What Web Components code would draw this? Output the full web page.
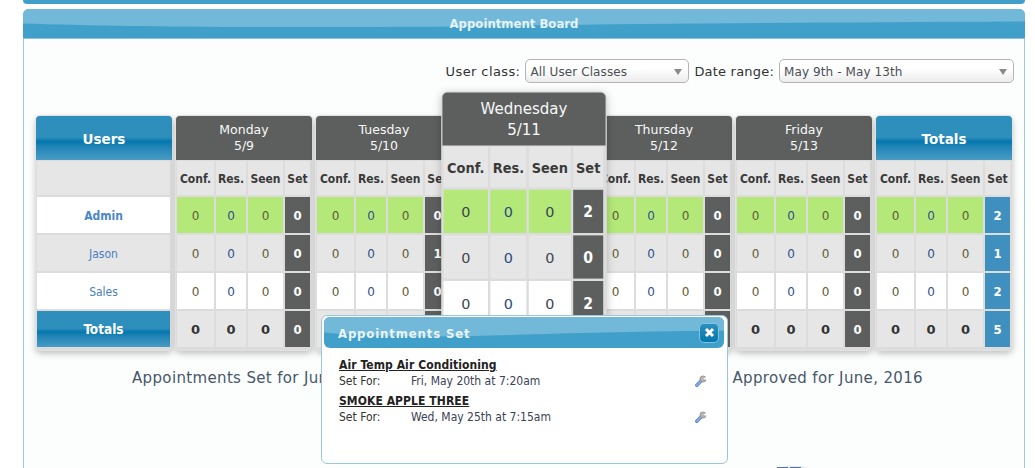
<!DOCTYPE html>
<html>
<head>
<meta charset="utf-8">
<title>Appointment Board</title>
<style>
    html, body { margin: 0; height: 100%; overflow: hidden; background: #fff; }
    body { font-family: "DejaVu Sans Condensed", "DejaVu Sans", sans-serif; }
    app-page { padding: 0 10px 0 23px; }
</style>
</head>
<body>
<app-page>
    <board-panel title="Appointment Board">
        <board-toolbar>
            <span class="lbl wide">User class:</span>
            <fake-select width="164">All User Classes</fake-select>
            <span class="lbl">Date range:</span>
            <fake-select width="235">May 9th - May 13th</fake-select>
        </board-toolbar>
        <board-grid>
            <users-column></users-column>
            <day-column day="Monday" date="5/9" sets="0,0,0,0"></day-column>
            <day-column day="Tuesday" date="5/10" sets="0,1,0,0"></day-column>
            <day-column day="Wednesday" date="5/11" sets="2,0,2,0" lifted></day-column>
            <day-column day="Thursday" date="5/12" sets="0,0,0,0"></day-column>
            <day-column day="Friday" date="5/13" sets="0,0,0,0"></day-column>
            <day-column day="Totals" sets="2,1,2,5" totals></day-column>
        </board-grid>
        <board-caption>
            <span>Appointments Set for June, 2016</span>
            <span>Appointments Approved for June, 2016</span>
        </board-caption>
        <board-globe></board-globe>
        <appt-popup title="Appointments Set">
            <appt-item name="Air Temp Air Conditioning" when="Fri, May 20th at 7:20am"></appt-item>
            <appt-item name="SMOKE APPLE THREE" when="Wed, May 25th at 7:15am"></appt-item>
        </appt-popup>
    </board-panel>
</app-page>
<script>
const glossBar = `
    <svg class="gloss" viewBox="0 0 1000 30" preserveAspectRatio="none" aria-hidden="true">
        <path d="M0 0H1000V13C800 14 650 15 500 17C300 20 120 19 0 15Z" fill="#72b8d8"/>
    </svg>`;

class AppPage extends HTMLElement {
    connectedCallback() {
        this.attachShadow({ mode: 'open' });
        this.shadowRoot.innerHTML = `
            <style>
                :host { display: block; }
                .topbar {
                    height: 4px;
                    background: #409fc9;
                    border-radius: 0 0 5px 5px;
                    margin-bottom: 5px;
                }
            </style>
            <div class="topbar"></div>
            <slot></slot>
        `;
    }
}
customElements.define('app-page', AppPage);

class BoardPanel extends HTMLElement {
    connectedCallback() {
        this.attachShadow({ mode: 'open' });
        this.shadowRoot.innerHTML = `
            <style>
                :host { display: block; position: relative; }
                header {
                    position: relative;
                    height: 29px;
                    background: #41a0ca;
                    border-radius: 6px 6px 0 0;
                    overflow: hidden;
                    display: flex;
                    align-items: center;
                    justify-content: center;
                    padding-right: 20px;
                    color: #e4f3fa;
                    font-size: 13px;
                    font-weight: bold;
                }
                .gloss { position: absolute; inset: 0; width: 100%; height: 100%; }
                header span { position: relative; padding-bottom: 1px; }
                .body {
                    background: #fcfdfd;
                    border: 1px solid #9cc8e2;
                    border-top-color: #8fc0de;
                    border-bottom: 0;
                    height: 430px;
                    box-sizing: border-box;
                    overflow: hidden;
                }
            </style>
            <header>${glossBar}<span>${this.getAttribute('title')}</span></header>
            <div class="body"><slot></slot></div>
        `;
    }
}
customElements.define('board-panel', BoardPanel);

class BoardToolbar extends HTMLElement {
    connectedCallback() {
        this.attachShadow({ mode: 'open' });
        this.shadowRoot.innerHTML = `
            <style>
                :host {
                    display: flex;
                    justify-content: flex-end;
                    align-items: center;
                    gap: 5px;
                    height: 24px;
                    margin-top: 20px;
                    padding-right: 10px;
                    color: #333;
                    font-family: "DejaVu Sans", sans-serif;
                    font-size: 13px;
                }
                ::slotted(.lbl) { letter-spacing: 0.2px; }
                ::slotted(.wide) { letter-spacing: 0.4px; }
            </style>
            <slot></slot>
        `;
    }
}
customElements.define('board-toolbar', BoardToolbar);

class FakeSelect extends HTMLElement {
    connectedCallback() {
        this.attachShadow({ mode: 'open' });
        this.shadowRoot.innerHTML = `
            <style>
                :host {
                    display: flex;
                    align-items: center;
                    box-sizing: border-box;
                    height: 24px;
                    width: ${this.getAttribute('width')}px;
                    padding: 1px 6px 0 4px;
                    border: 1px solid #b4b4b4;
                    border-radius: 5px;
                    background: linear-gradient(#fff 40%, #ececec);
                    color: #4a4f55;
                    font-size: 12px;
                    letter-spacing: 0.1px;
                }
                .txt { flex: 1; }
                .arrow {
                    border: 4px solid transparent;
                    border-top: 6px solid #8a8a8a;
                    border-bottom: 0;
                }
            </style>
            <span class="txt"><slot></slot></span>
            <span class="arrow"></span>
        `;
    }
}
customElements.define('fake-select', FakeSelect);

class BoardGrid extends HTMLElement {
    connectedCallback() {
        this.attachShadow({ mode: 'open' });
        this.shadowRoot.innerHTML = `
            <style>
                :host {
                    display: flex;
                    gap: 4px;
                    margin-top: 33px;
                    padding-left: 12px;
                }
            </style>
            <slot></slot>
        `;
    }
}
customElements.define('board-grid', BoardGrid);

const blueGloss = 'linear-gradient(#2e8fbc 0, #2e8fbc 48%, #0577ad 58%, #2586b8 72%, #479cc4 100%)';

const cardStyle = `
    :host {
        display: block;
        width: 136px;
        height: 234px;
        background: #dcdcdc;
        border-radius: 4px;
        box-shadow: 0 0 0 1px #e2e2e2, 0 3px 7px rgba(0, 0, 0, 0.28);
        color: #333;
    }
    .head {
        height: 44px;
        box-sizing: border-box;
        border-radius: 4px 4px 0 0;
        display: flex;
        flex-direction: column;
        align-items: center;
        justify-content: center;
        color: #f8f8f8;
        font-family: "DejaVu Sans", sans-serif;
        font-size: 12.5px;
        line-height: 16px;
        background: #5d5f5e;
    }
    .head.blue {
        background: ${blueGloss};
        color: #fff;
        font-weight: bold;
        font-size: 13.5px;
        padding-top: 1px;
    }
    .cell {
        display: flex;
        align-items: center;
        justify-content: center;
        padding-top: 1px;
        background: #e6e6e6;
        font-size: 12px;
    }
`;

class UsersColumn extends HTMLElement {
    connectedCallback() {
        this.attachShadow({ mode: 'open' });
        this.shadowRoot.innerHTML = `
            <style>
                ${cardStyle}
                .rows {
                    display: grid;
                    grid-template-rows: 34px repeat(4, 36px);
                    gap: 2px;
                    padding: 1px 2px 0 1px;
                }
                .cell { color: #4a7fc0; }
                .white { background: #fff; }
                .admin { font-weight: bold; color: #4a86c8; }
                .total {
                    background: ${blueGloss};
                    color: #fff;
                    font-weight: bold;
                    font-size: 13.5px;
                    padding-top: 0;
                }
            </style>
            <div class="head blue">Users</div>
            <div class="rows">
                <div class="cell"></div>
                <div class="cell white admin">Admin</div>
                <div class="cell">Jason</div>
                <div class="cell white">Sales</div>
                <div class="cell total">Totals</div>
            </div>
        `;
    }
}
customElements.define('users-column', UsersColumn);

class DayColumn extends HTMLElement {
    connectedCallback() {
        this.attachShadow({ mode: 'open' });
        const date = this.getAttribute('date');
        const totals = this.hasAttribute('totals');
        const sets = this.getAttribute('sets').split(',');
        const rowClass = ['green', 'grey', 'white', 'sum'];
        let cells = ['Conf.', 'Res.', 'Seen', 'Set'].map(t => `<div class="cell th">${t}</div>`).join('');
        sets.forEach((n, i) => {
            cells += `
                <div class="cell num ${rowClass[i]} a">0</div>
                <div class="cell num ${rowClass[i]} b">0</div>
                <div class="cell num ${rowClass[i]} a">0</div>
                <div class="cell set">${n}</div>`;
        });
        this.shadowRoot.innerHTML = `
            <style>
                ${cardStyle}
                :host([lifted]) {
                    position: relative;
                    z-index: 2;
                    transform: scale(1.2);
                    box-shadow: 0 0 0 1px #dcdcdc, 0 2px 8px rgba(0, 0, 0, 0.28);
                }
                :host([lifted]) .head { line-height: 17.5px; }
                :host([lifted]) .a { color: #3c4650; }
                :host([lifted]) .b { color: #2c4a80; }
                .rows {
                    display: grid;
                    grid-template-columns: 37px 30px 35px 25px;
                    grid-template-rows: 34px repeat(4, 36px);
                    column-gap: 2px;
                    row-gap: 2px;
                    padding: 1px 2px 0 1px;
                }
                .th { font-weight: bold; color: #3a3a3a; font-size: 12px; }
                .num { font-family: "DejaVu Sans", sans-serif; }
                .green { background: #b4e97a; }
                .white { background: #fff; }
                .a { color: #5c5c34; }
                .b { color: #2f4f8c; }
                .cell.sum { color: #333; font-weight: bold; font-size: 13px; }
                .set {
                    background: ${totals ? '#3f90bf' : '#5d5f5e'};
                    color: #fff;
                    font-weight: bold;
                    font-size: 13px;
                }
            </style>
            <div class="head ${totals ? 'blue' : ''}">
                <span>${this.getAttribute('day')}</span>
                ${date ? `<span>${date}</span>` : ''}
            </div>
            <div class="rows">${cells}</div>
        `;
    }
}
customElements.define('day-column', DayColumn);

class BoardCaption extends HTMLElement {
    connectedCallback() {
        this.attachShadow({ mode: 'open' });
        this.shadowRoot.innerHTML = `
            <style>
                :host {
                    display: flex;
                    justify-content: space-between;
                    margin: 18px 101px 0 108px;
                    color: #46586b;
                    font-family: "DejaVu Sans", sans-serif;
                    font-size: 15px;
                    line-height: 20px;
                    letter-spacing: 0.35px;
                }
            </style>
            <slot></slot>
        `;
    }
}
customElements.define('board-caption', BoardCaption);

// top of the round badge that is cut off by the bottom of the window
class BoardGlobe extends HTMLElement {
    connectedCallback() {
        this.attachShadow({ mode: 'open' });
        this.shadowRoot.innerHTML = `
            <style>
                :host { display: block; height: 6px; margin: 77px 0 0 751px; line-height: 0; }
            </style>
            <svg width="36" height="6" viewBox="0 0 36 6" aria-hidden="true">
                <path d="M0 4C8 0 28 0 36 4V6H0Z" fill="#e3e9f1"/>
                <rect x="2" y="2" width="11" height="4" fill="#4f74a8"/>
                <rect x="15" y="2" width="11" height="4" fill="#4f74a8"/>
            </svg>
        `;
    }
}
customElements.define('board-globe', BoardGlobe);

class ApptPopup extends HTMLElement {
    connectedCallback() {
        this.attachShadow({ mode: 'open' });
        this.shadowRoot.innerHTML = `
            <style>
                :host {
                    position: absolute;
                    left: 298px;
                    top: 306px;
                    z-index: 5;
                    box-sizing: border-box;
                    width: 407px;
                    height: 149px;
                    padding: 1px 3px 0 2px;
                    background: #fff;
                    border: 1px solid #9cc5e0;
                    border-radius: 6px;
                }
                header {
                    position: relative;
                    height: 31px;
                    background: #41a0ca;
                    border-radius: 6px;
                    overflow: hidden;
                    display: flex;
                    align-items: center;
                    padding: 0 5px 0 14px;
                    color: #e8f5fb;
                    font-size: 13px;
                    font-weight: bold;
                    letter-spacing: 0.85px;
                }
                .gloss { position: absolute; inset: 0; width: 100%; height: 100%; }
                .title { position: relative; flex: 1; padding-top: 1px; }
                .close {
                    position: relative;
                    box-sizing: border-box;
                    width: 20px;
                    height: 20px;
                    border: 1px solid #7cc3e4;
                    border-radius: 5px;
                    background: linear-gradient(#2e8fbc, #0577ad);
                    display: flex;
                    align-items: center;
                    justify-content: center;
                }
                .list { padding: 9px 15px 0 15px; }
            </style>
            <header>
                ${glossBar}
                <span class="title">${this.getAttribute('title')}</span>
                <span class="close">
                    <svg width="11" height="11" viewBox="0 0 11 11" aria-hidden="true">
                        <path d="M2 2L9 9M9 2L2 9" stroke="#fff" stroke-width="3"/>
                    </svg>
                </span>
            </header>
            <div class="list"><slot></slot></div>
        `;
    }
}
customElements.define('appt-popup', ApptPopup);

class ApptItem extends HTMLElement {
    connectedCallback() {
        this.attachShadow({ mode: 'open' });
        this.shadowRoot.innerHTML = `
            <style>
                :host { display: block; margin-bottom: 4px; color: #333; font-size: 12px; }
                .name {
                    font-weight: bold;
                    text-decoration: underline;
                    color: #222;
                    line-height: 16px;
                    letter-spacing: 0.08px;
                }
                .line { display: flex; align-items: center; line-height: 16px; }
                .k { width: 72px; }
                .v { flex: 1; color: #3a4256; }
                svg { margin-right: 2px; }
            </style>
            <div class="name">${this.getAttribute('name')}</div>
            <div class="line">
                <span class="k">Set For:</span>
                <span class="v">${this.getAttribute('when')}</span>
                <svg width="12" height="12" viewBox="0 0 12 12" aria-hidden="true">
                    <path d="M1.8 10.2L6 6" stroke="#5f86cc" stroke-width="3.4" stroke-linecap="round"/>
                    <path d="M1.8 10.2L6 6" stroke="#97b4ea" stroke-width="1.4" stroke-linecap="round"/>
                    <circle cx="8" cy="4" r="3.1" fill="#b4b4b4" stroke="#858585" stroke-width="0.7"/>
                    <path d="M8.2 3.8L12 1.6V5Z" fill="#fff"/>
                </svg>
            </div>
        `;
    }
}
customElements.define('appt-item', ApptItem);
</script>
</body>
</html>
